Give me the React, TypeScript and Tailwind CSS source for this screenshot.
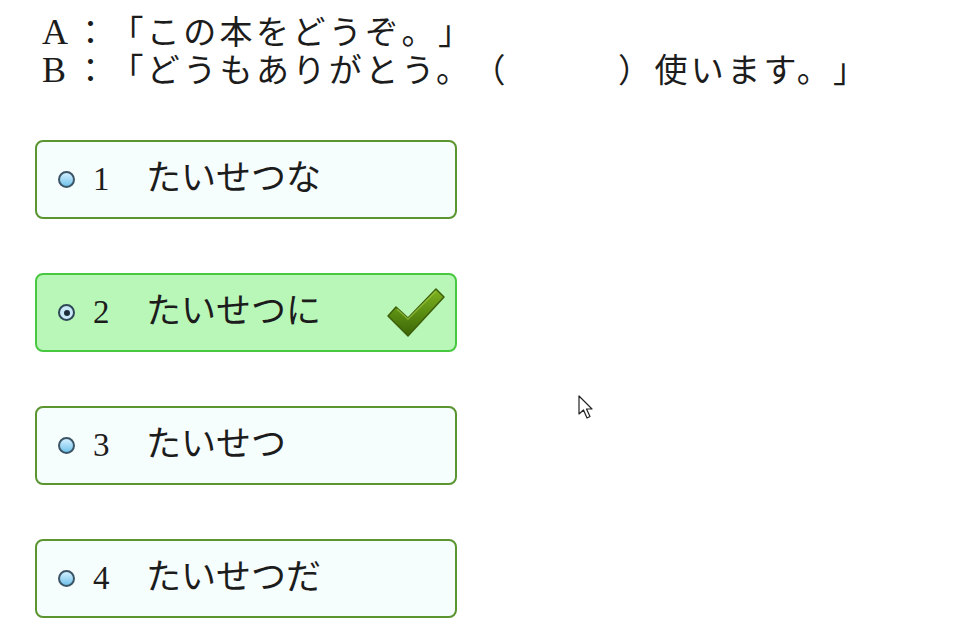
import React from "react";

type Choice = {
  no: string;
  text: string;
  selected?: boolean;
};

const choices: Choice[] = [
  { no: "1", text: "たいせつな" },
  { no: "2", text: "たいせつに", selected: true },
  { no: "3", text: "たいせつ" },
  { no: "4", text: "たいせつだ" },
];

const font = {
  fontFamily: '"Liberation Serif", "Noto Sans CJK JP", serif',
};

const Radio = ({ on }: { on?: boolean }) =>
  on ? (
    <span className="flex h-[17px] w-[17px] shrink-0 items-center justify-center rounded-full border-2 border-[#2f4656] bg-[#c9e8f7]">
      <span className="h-[6px] w-[6px] rounded-full bg-[#1d2c38]" />
    </span>
  ) : (
    <span className="h-[17px] w-[17px] shrink-0 rounded-full border-2 border-[#3b5566] bg-gradient-to-b from-[#d2efff] to-[#6fc2ea]" />
  );

const Check = () => (
  <svg width="62" height="54" viewBox="0 0 62 54" className="shrink-0">
    <defs>
      <linearGradient id="chk" x1="0" y1="0" x2="0" y2="1">
        <stop offset="0" stopColor="#7fb320" />
        <stop offset="0.5" stopColor="#5b8e12" />
        <stop offset="1" stopColor="#3c6507" />
      </linearGradient>
    </defs>
    <path
      d="M3 30 L11 21 L23 32 L51 3 L59 11 L23 50 Z"
      fill="url(#chk)"
      stroke="#3d5f0a"
      strokeWidth="1.5"
      strokeLinejoin="round"
    />
    <path d="M12 23 L23 33 L51 5" fill="none" stroke="#a6d24a" strokeWidth="1.5" opacity="0.6" />
  </svg>
);

const Cursor = () => (
  <svg width="20" height="26" viewBox="0 0 20 26" className="absolute left-[578px] top-[395px]">
    <path
      d="M1 1 L1 19 L5.5 15 L9 23 L12 21.5 L8.5 14 L14 14 Z"
      fill="#fff"
      stroke="#222"
      strokeWidth="1.2"
      strokeLinejoin="round"
    />
  </svg>
);

const Speaker = ({ who }: { who: string }) => (
  <span className="inline-block w-[32px] text-[36px]">{who}</span>
);

export default function App() {
  return (
    <div
      className="relative h-[627px] w-[961px] overflow-hidden bg-white text-[#1c1c1c] [text-spacing-trim:space-all]"
      style={font}
    >
      <div className="pl-[42px] pt-[14px] text-[33px] leading-[37px] tracking-[3.4px]">
        <div>
          <Speaker who="A" />：「この本をどうぞ。」
        </div>
        <div>
          <Speaker who="B" />：「どうもありがとう。（　　　）使います。」
        </div>
      </div>

      <div className="ml-[35px] mt-[50px] flex w-[422px] flex-col gap-[54px]">
        {choices.map((c) => (
          <div
            key={c.no}
            className={
              c.selected
                ? "flex h-[79px] items-center rounded-[8px] border-2 border-[#48c840] bg-[#b9f7b9] pl-[21px] pr-[8px]"
                : "flex h-[79px] items-center rounded-[8px] border-2 border-[#5a9530] bg-[#f6fdfd] pl-[21px] pr-[8px]"
            }
          >
            <Radio on={c.selected} />
            <span className="ml-[18px] w-[53px] text-[33px]">{c.no}</span>
            <span className="text-[35px]">{c.text}</span>
            {c.selected && (
              <div className="ml-auto">
                <Check />
              </div>
            )}
          </div>
        ))}
      </div>

      <Cursor />
    </div>
  );
}
